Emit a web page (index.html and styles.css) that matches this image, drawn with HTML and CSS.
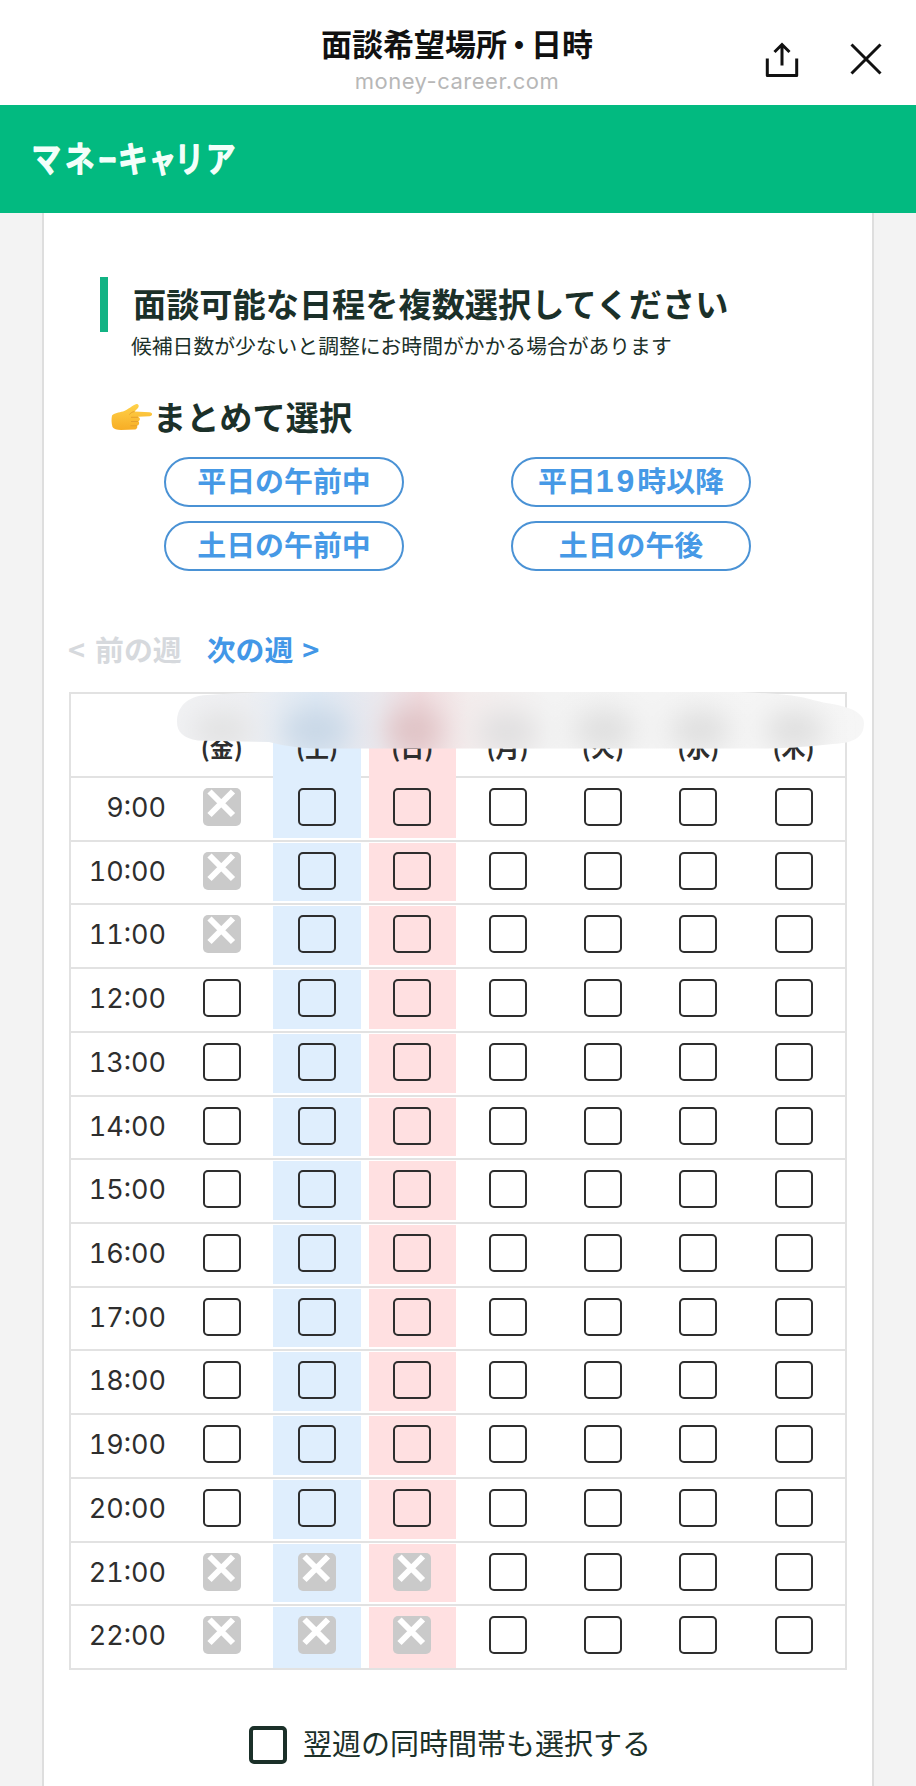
FILE: index.html
```html
<!DOCTYPE html>
<html lang="ja">
<head>
<meta charset="utf-8">
<title>面談希望場所・日時</title>
<link rel="stylesheet" href="styles.css">
</head>
<body>
<header class="browser-bar">
  <div class="page-info">
    <div class="page-title">面談希望場所<span class="dot">・</span>日時</div>
    <div class="page-host">money-career.com</div>
  </div>
  <div class="bar-actions">
    <svg class="share" width="34" height="38" viewBox="0 0 34 38" fill="none" stroke="#111" stroke-width="3"><path d="M2.3 17.5V34.5H31.7V17.5" stroke-linejoin="round"/><path d="M17 24.5V3.5M9.5 11L17 3.5L24.5 11"/></svg>
    <svg class="close" width="32" height="32" viewBox="0 0 32 32" fill="none" stroke="#111" stroke-width="3"><path d="M1.5 1.5L30.5 30.5M30.5 1.5L1.5 30.5"/></svg>
  </div>
</header>
<div class="brand">
  <svg class="logo" width="220" height="50" viewBox="0 0 220 50"><text transform="scale(1 1.2)" y="31.500" x="0.500 34">マネ<tspan class="dash" x="68" y="28">ー</tspan><tspan x="87" y="31.500">キ</tspan><tspan class="small" x="118" y="31.500">ャ</tspan><tspan x="143.500 175" y="31.500">リア</tspan></text></svg>
</div>
<main class="card">
  <section class="intro">
    <div class="accent"></div>
    <div class="heading">面談可能な日程を複数選択してください</div>
  </section>
  <p class="note">候補日数が少ないと調整にお時間がかかる場合があります</p>
  <div class="bulk-title">
    <svg width="42" height="28" viewBox="0 0 42 28"><defs><linearGradient id="skin" x1="0" y1="0" x2="0" y2="1"><stop offset="0" stop-color="#ffd24a"/><stop offset="1" stop-color="#f7ad25"/></linearGradient></defs><path d="M1 12.5C3 10 8 9.500 12 8.500C17 7 22 1.500 25.500 1C28 1 28.500 3.500 26.500 5.500L23.500 8.600L38.500 9.200C42 9.500 42 13 38.500 13.300L27 13.700C29.500 14.500 29.500 17.500 27.300 18.200C29 19.500 28 22.500 26 22.700C27 24.500 25.500 26.500 23.500 26.600L10 27C6 27 2.500 26 1.500 24C.3 20 .3 16 1 12.500Z" fill="url(#skin)"/><path d="M20 14.300H27M20 18.500H27M19.500 22.800H26M23.500 8.600C21 9 19.500 10 18.500 11.500" fill="none" stroke="#e5a02c" stroke-width="1"/></svg><span>まとめて選択</span>
  </div>
  <div class="bulk">
    <button>平日の午前中</button><button>平日<span class="num">19</span>時以降</button>
    <button>土日の午前中</button><button>土日の午後</button>
  </div>
  <nav class="weeks"><span class="prev"><i>&lt;</i>前の週</span><span class="next">次の週<i>&gt;</i></span></nav>
  <div class="schedule">
    <div id="grid"></div>
    <svg class="smudge" width="800" height="64" viewBox="0 0 800 64">
      <defs>
        <clipPath id="blot"><path d="M109 30C109 15 119 4 139 3C165 1 190 0 220 0H670C700 1 730 3 745 8C760 12 770 12 780 16C792 20 796 26 796 31C796 44 788 51 765 52C745 54 725 56 700 56.500H265C240 57 220 55 201 50L130 48.500C115 46 109 40 109 30Z"/></clipPath>
        <linearGradient id="sky" x1="0" y1="0" x2="1" y2="0"><stop offset="0" stop-color="#f5f5f5"/><stop offset=".22" stop-color="#eeeff2"/><stop offset=".31" stop-color="#dfe9f4"/><stop offset=".39" stop-color="#eae8ed"/><stop offset=".44" stop-color="#f0dcdf"/><stop offset=".5" stop-color="#f3ecec"/><stop offset=".6" stop-color="#f3f3f3"/><stop offset="1" stop-color="#f6f6f6"/></linearGradient>
        <filter id="soft" x="-60%" y="-60%" width="220%" height="220%"><feGaussianBlur stdDeviation="14"/></filter>
      </defs>
      <g clip-path="url(#blot)">
        <rect width="800" height="64" fill="url(#sky)"/>
        <g filter="url(#soft)">
          <ellipse cx="154" cy="38" rx="30" ry="16" fill="#e0e0e0"/>
          <ellipse cx="248" cy="38" rx="34" ry="22" fill="#c8d7e6"/>
          <ellipse cx="346" cy="38" rx="28" ry="24" fill="#dfc2c5"/>
          <ellipse cx="440" cy="40" rx="30" ry="20" fill="#dfdedf"/>
          <ellipse cx="536" cy="38" rx="30" ry="20" fill="#dedede"/>
          <ellipse cx="632" cy="38" rx="30" ry="20" fill="#dedede"/>
          <ellipse cx="727" cy="38" rx="30" ry="20" fill="#dedede"/>
        </g>
      </g>
    </svg>
  </div>
  <label class="repeat"><span class="repeat-box"></span><span class="repeat-text">翌週の同時間帯も選択する</span></label>
</main>
<script src="script.js"></script>
</body>
</html>
```
FILE: styles.css
```css
* { box-sizing: border-box; }
body { margin: 0; height: 1786px; overflow: hidden; background: #f3f3f3; color: #1b3029; font-family: "Noto Sans CJK JP", sans-serif; }
.browser-bar { height: 105px; background: #fff; display: grid; grid-template-columns: 321px 272px 1fr; color: #111; }
.page-info { grid-column: 2; padding-top: 23px; text-align: center; white-space: nowrap; }
.page-title { font-size: 31px; line-height: 40px; font-weight: 700; height: 40px; }
.page-title .dot { margin: 0 -3.5px; }
.page-host { font: 22px/32px Inter, sans-serif; letter-spacing: .5px; color: #b7b7b7; padding-top: 2px; }
.bar-actions { display: flex; padding: 41px 0 0 172px; }
.close { margin: 2px 0 0 51px; flex: none; }
.share { flex: none; }
.brand { height: 108px; background: #02ba80; padding: 29px 0 0 31px; }
.logo { display: block; overflow: visible; }
.logo text { font-family: "Noto Sans CJK JP", sans-serif; font-size: 29.500px; font-weight: 500; fill: #f2fffa; stroke: #f2fffa; stroke-width: 1.600; stroke-linejoin: round; }
.logo .dash { font-size: 17px; stroke-width: 2.600; }
.logo .small { font-size: 27px; }
.card { margin: 0 42px; height: 1573px; background: #fff; border: solid #dedede; border-width: 0 2px; padding-top: 64px; }
.intro { display: flex; height: 55px; padding-left: 56px; gap: 25px; }
.accent { width: 8px; height: 55px; background: #12b384; }
.heading { font-size: 33.2px; font-weight: 700; line-height: 51px; white-space: nowrap; }
.note { margin: -1px 0 0 87px; font-size: 20.8px; line-height: 28px; height: 28px; white-space: nowrap; }
.bulk-title { display: flex; align-items: center; margin-top: 34px; padding-left: 67px; height: 48px; font-size: 33.2px; line-height: 46px; font-weight: 700; }
.bulk-title span { padding-bottom: 2px; }
.bulk { display: grid; grid-template-columns: 240px 240px; gap: 14px 107px; margin: 16px 0 0 120px; }
.bulk button { height: 50px; padding: 0 0 5px; border: 2px solid #4a92d5; border-radius: 26px; background: #fff; color: #4699e6; font: 700 28.9px/41px "Noto Sans CJK JP", sans-serif; white-space: nowrap; }
.num { font-family: "Liberation Sans", sans-serif; font-size: 32px; line-height: 30px; letter-spacing: 3px; }
.weeks { display: flex; gap: 25px; margin: 55px 0 0 24px; height: 44px; font-size: 28.9px; line-height: 44px; font-weight: 700; }
.weeks i { font-style: normal; display: inline-block; width: 27px; }
.prev { color: #d6d9dd; }
.next { color: #4297e7; }
.next i { padding-left: 9px; }
.schedule { position: relative; margin: 22px 0 0 25px; width: 778px; height: 978px; border: 2px solid #e2e2e2; }
.smudge { position: absolute; left: -3px; top: -2px; }
.row { display: grid; grid-template-columns: 103.100px repeat(7, 95.300px); height: 63.730px; border-bottom: 2px solid #e2e2e2; font: 27px/59px Inter, sans-serif; font-variant-numeric: tabular-nums; color: #2e2e2e; }
.row:last-child { border-bottom: 0; }
.row.days { height: 84px; font: 700 24px/82px "Noto Sans CJK JP", sans-serif; }
.time { text-align: right; padding-right: 8px; }
.cell { display: flex; justify-content: center; margin: 1px 4px 2px; padding-top: 9px; }
.days .cell { margin: 0 4px; padding: 17px 0 0; line-height: 72px; }
.sat { background: #dfeefd; }
.sun { background: #ffe0e1; }
.box { width: 38px; height: 38px; border: 2px solid #2e2e2e; border-radius: 5px; }
.box.off { border: 0; background: #cacaca; }
.off svg { display: block; }
.repeat { display: flex; align-items: center; gap: 16px; margin: 56px 0 0 205px; height: 38px; font-size: 29px; line-height: 38px; white-space: nowrap; }
.repeat-text { padding-bottom: 6px; }
.repeat-box { width: 38px; height: 38px; border: 4px solid #1b3029; border-radius: 5px; }
```
FILE: script.js
```js
const days = ["金", "土", "日", "月", "火", "水", "木"];
const tint = ["", " sat", " sun", "", "", "", ""];
const cross = '<svg width="38" height="38" viewBox="0 0 38 38"><path d="M6.500 3.500L30 27M30 3.500L6.500 27" stroke="#fff" stroke-width="6"/></svg>';

// Friday mornings and late weekend-side slots are already taken.
function taken(hour, day) {
  return (day === 0 && hour < 12) || (day < 3 && hour > 20);
}

let html = '<div class="row days"><div></div>' +
  days.map((d, i) => `<div class="cell${tint[i]}">(${d})</div>`).join("") + "</div>";
for (let hour = 9; hour <= 22; hour++) {
  html += `<div class="row"><div class="time">${hour}:00</div>` +
    days.map((d, i) => `<div class="cell${tint[i]}"><span class="box${taken(hour, i) ? " off" : ""}">${taken(hour, i) ? cross : ""}</span></div>`).join("") +
    "</div>";
}
document.getElementById("grid").innerHTML = html;
```
